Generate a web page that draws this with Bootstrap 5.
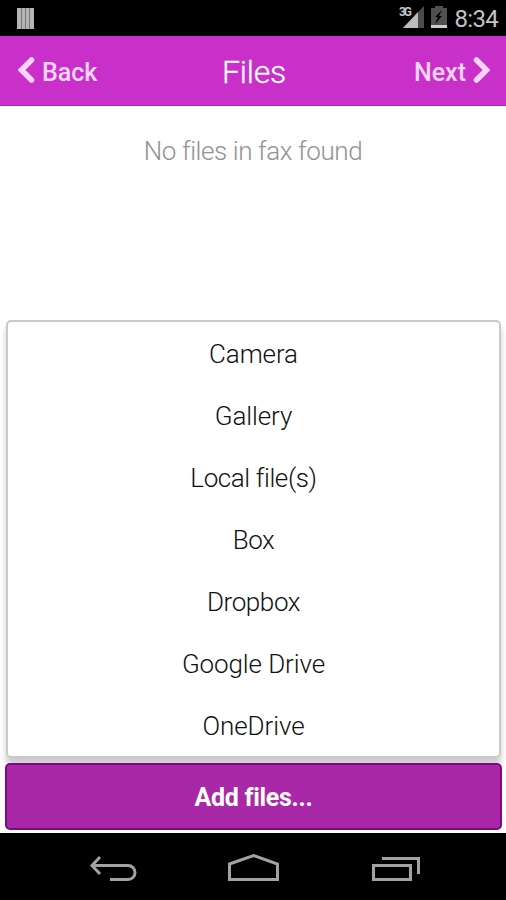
<!DOCTYPE html>
<html lang="en">
<head>
<meta charset="utf-8">
<meta name="viewport" content="width=device-width, initial-scale=1">
<title>Files</title>
<link href="https://cdn.jsdelivr.net/npm/bootstrap@5.3.0/dist/css/bootstrap.min.css" rel="stylesheet">
<style>
body{font-family:Roboto,"Noto Sans",sans-serif;font-size:26px;line-height:1;height:900px;background:#fefefe;overflow:hidden}
.status-strip{height:36px;background:#000;color:#c4c4c4;padding:0 8px 0 16px}
.clock{font-size:24px;letter-spacing:-.7px;padding-top:2px;margin-left:6px}
.title-bar{height:70px;background:#c930c9;border-bottom:1px solid #b91fbb;color:#fff;padding:3px 16px 0 18px}
.nav-action{flex:1 1 0;font-size:25px;font-weight:500;color:#fbd5fa;text-decoration:none}
.nav-action svg{margin-top:-8px}
.nav-action span{margin:0 7px}
.screen-title{font-size:32px;font-weight:300;letter-spacing:-.2px;-webkit-text-stroke:.3px #fff}
.empty-note{height:214px;padding-top:32px;color:#929292;font-weight:300;letter-spacing:-.4px}
.sheet{height:438px;margin:0 5px 0 6px;border:2px solid #c9c9c9;border-radius:5px;background:#fff;box-shadow:0 7px 6px rgba(0,0,0,.2)}
.sheet .list-group-item{height:62px;padding:2px 0 0;border:0;background:none;color:#111;font-weight:300;letter-spacing:-.1px}
.sheet .tight{letter-spacing:-.4px}
.add-btn{height:67px;margin:5px 4px 0 5px;padding-top:8px;border:2px solid #7c0c7e;border-radius:5px;background:#a928a8!important;color:#fff!important;font-weight:700;font-size:25px;letter-spacing:-.3px;z-index:1}
.system-bar{height:67px;margin-top:3px;background:#000}
</style>
<script src="https://cdn.jsdelivr.net/npm/bootstrap@5.3.0/dist/js/bootstrap.bundle.min.js"></script>
</head>
<body class="d-flex flex-column">
<div class="status-strip d-flex align-items-center flex-shrink-0">
  <svg width="19" height="22" viewBox="0 0 19 22"><path fill="#b5b5b5" d="M1 1h17v21H1z"/><path stroke="#777" d="M5.500 1v21M9.500 1v21M13.500 1v21"/></svg>
  <svg class="ms-auto" width="50" height="36" viewBox="0 0 50 36">
    <path fill="#4b4b4b" d="M25 6v22H4z"/><path fill="#bdbdbd" d="M19 12v16H4z"/><path fill="#000" d="M0 4h14v13H0z"/>
    <text x="0" y="16" font-size="12" font-weight="700" fill="#c4c4c4" textLength="13">3G</text>
    <path fill="#505050" d="M32 8h4V6h8v2h4v17H32z"/><path fill="#cfcfcf" d="M32 25h16v3H32z"/><path fill="#000" d="M43 10l-7 7h3l-3 7 7-8h-3z"/>
  </svg>
  <span class="clock">8:34</span>
</div>
<header class="title-bar d-flex align-items-center flex-shrink-0">
  <a href="#" class="nav-action"><svg width="17" height="26" viewBox="0 0 17 26" fill="none" stroke="#fbd5fa" stroke-width="5.500" stroke-linejoin="miter" stroke-linecap="round"><path d="M13.500 3L3.500 13l10 10"/></svg><span class="me-0">Back</span></a>
  <span class="screen-title">Files</span>
  <a href="#" class="nav-action text-end"><span class="ms-0">Next</span><svg width="17" height="26" viewBox="0 0 17 26" fill="none" stroke="#fbd5fa" stroke-width="5.500" stroke-linejoin="miter" stroke-linecap="round"><path d="M3.500 3l10 10-10 10"/></svg></a>
</header>
<div class="empty-note text-center flex-shrink-0">No files in fax found</div>
<div class="sheet list-group flex-shrink-0">
  <a href="#" class="list-group-item d-flex align-items-center justify-content-center">Camera</a>
  <a href="#" class="list-group-item d-flex align-items-center justify-content-center">Gallery</a>
  <a href="#" class="list-group-item tight d-flex align-items-center justify-content-center">Local file(s)</a>
  <a href="#" class="list-group-item tight d-flex align-items-center justify-content-center">Box</a>
  <a href="#" class="list-group-item tight d-flex align-items-center justify-content-center">Dropbox</a>
  <a href="#" class="list-group-item d-flex align-items-center justify-content-center">Google Drive</a>
  <a href="#" class="list-group-item d-flex align-items-center justify-content-center">OneDrive</a>
</div>
<button type="button" class="add-btn btn flex-shrink-0">Add files...</button>
<nav class="system-bar flex-shrink-0">
  <svg class="d-block" width="506" height="67" viewBox="0 833 506 67" fill="none" stroke="#a2a2a2" stroke-width="3">
    <path d="M110 879.500h18a7 7 0 0 0 0-14H92M100 857l-8 8.500 8 8.500"/>
    <path d="M229.500 864l24-8.500 24 8.500v15.500h-48z"/>
    <path d="M373.500 865.500h37v14h-37zM382 858.500h36.500V874"/>
  </svg>
</nav>
</body>
</html>
